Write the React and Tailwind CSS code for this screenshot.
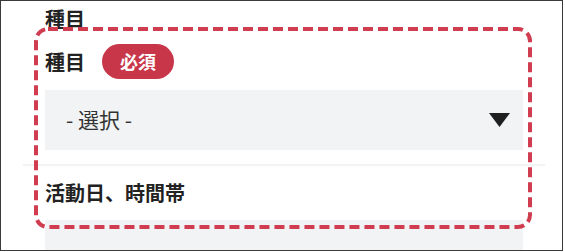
export default function App() {
  return (
    <div
      className="relative w-[563px] h-[251px] overflow-hidden border border-[#3a3a3a] bg-white text-[#222]"
      style={{ fontFamily: '"Noto Sans CJK JP", "Noto Sans", sans-serif' }}
    >
      <div className="ml-[22px] w-[522px]">
        <div className="px-[22px] pt-[3px]">
          <h2 className="text-[20px] font-bold leading-[30px]">種目</h2>
          <div className="mt-[10px] flex h-[35px] items-center gap-[17px]">
            <span className="text-[20px] font-bold leading-[30px]">種目</span>
            <span className="flex h-[35px] items-center rounded-full bg-[#c8364a] px-[18px] text-[18px] font-bold text-white">
              必須
            </span>
          </div>
          <div className="mt-[11px] flex h-[60px] items-center justify-between bg-[#f2f3f5] pl-[21px] pr-[13px]">
            <span className="text-[21px] text-[#333]">- 選択 -</span>
            <svg width="21" height="14" viewBox="0 0 21 14">
              <polygon points="0,0 21,0 10.5,14" fill="#1f1f1f" />
            </svg>
          </div>
        </div>
        <div className="mt-[14px] h-[2px] bg-[#f3f3f5]" />
        <div className="px-[22px]">
          <div className="mt-[12px] text-[20px] font-bold leading-[30px]">活動日、時間帯</div>
          <div className="mt-[12px] h-[40px] bg-[#f2f3f5]" />
        </div>
      </div>
      <svg
        className="absolute left-[33px] top-[26px]"
        width="498"
        height="202"
        viewBox="0 0 498 202"
      >
        <rect
          x="2"
          y="2"
          width="494"
          height="198"
          rx="12"
          fill="none"
          stroke="#d03c50"
          strokeWidth="4"
          strokeDasharray="10 5"
        />
      </svg>
    </div>
  );
}
